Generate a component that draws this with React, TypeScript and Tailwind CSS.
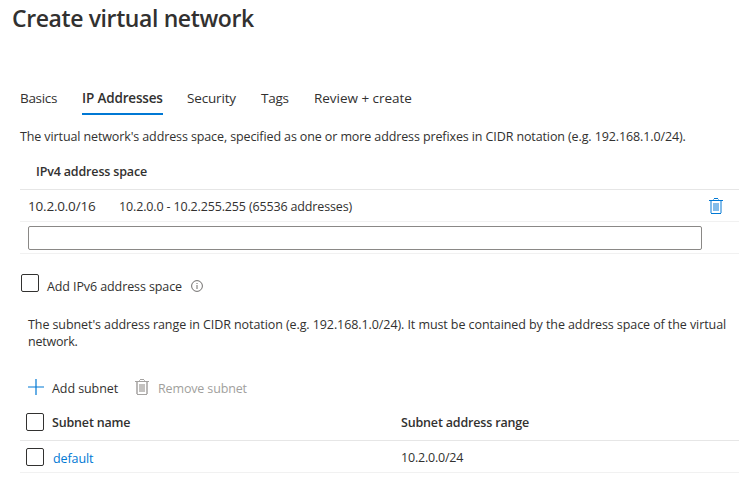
import type { ReactNode } from "react";

function TrashIcon({ dark, mid, fill }: { dark: string; mid: string; fill: string }) {
  return (
    <svg width="14" height="16" viewBox="0 0 14 16" shapeRendering="crispEdges" className="shrink-0">
      <rect x="5" y="0" width="4" height="1" fill={dark} />
      <rect x="4" y="1" width="1" height="1" fill={mid} />
      <rect x="9" y="1" width="1" height="1" fill={mid} />
      <rect x="0" y="2" width="14" height="1" fill={dark} />
      <rect x="1" y="3" width="2" height="12" fill={mid} />
      <rect x="11" y="3" width="2" height="12" fill={mid} />
      <rect x="4" y="5" width="6" height="8" fill={fill} />
      <rect x="2" y="15" width="10" height="1" fill={dark} />
    </svg>
  );
}

function PlusIcon() {
  return (
    <svg width="16" height="16" viewBox="0 0 16 16" className="shrink-0">
      <path d="M8 0v16M0 8h16" stroke="#0078d4" strokeWidth="1.2" fill="none" />
    </svg>
  );
}

function InfoIcon() {
  return (
    <svg width="12" height="12" viewBox="0 0 12 12" className="shrink-0">
      <circle cx="6" cy="6" r="5.4" fill="none" stroke="#605e5c" strokeWidth="0.9" />
      <path d="M6 5v4M6 3v1" stroke="#605e5c" strokeWidth="0.9" />
    </svg>
  );
}

function Checkbox({ className = "" }: { className?: string }) {
  return (
    <span
      role="checkbox"
      aria-checked="false"
      className={`block size-[18px] shrink-0 rounded-[2px] border border-[#323130] bg-white ${className}`}
    />
  );
}

function Tab({ children, className = "" }: { children: ReactNode; className?: string }) {
  return <div className={`h-[26px] text-[13.5px] leading-[18px] ${className}`}>{children}</div>;
}

export default function App() {
  return (
    <main className="h-[478px] w-[739px] overflow-hidden bg-white font-['Open_Sans','Noto_Sans',sans-serif] text-[12.5px] leading-[17px] whitespace-nowrap text-[#323130]">
      <h1 className="h-[89px] pt-[3px] pl-3 text-[23px] leading-[30px] font-semibold tracking-[-0.39px]">
        Create virtual network
      </h1>

      <nav className="flex pl-5">
        <Tab className="w-[62px] tracking-[-0.33px]">Basics</Tab>
        <Tab className="mr-[24px] w-[81px] border-b-2 border-[#0078d4] font-semibold tracking-[-0.17px]">
          IP Addresses
        </Tab>
        <Tab className="w-[74px] tracking-[-0.17px]">Security</Tab>
        <Tab className="w-[53px] tracking-[-0.25px]">Tags</Tab>
        <Tab className="tracking-[-0.03px]">Review + create</Tab>
      </nav>

      <section className="pl-5">
        <p className="pt-[13px] tracking-[-0.113px]">
          The virtual network's address space, specified as one or more address prefixes in CIDR notation (e.g.
          192.168.1.0/24).
        </p>
        <div className="mt-[18px] h-[27px] border-b border-[#e6e6e6] pl-4 font-semibold tracking-[-0.16px]">
          IPv4 address space
        </div>
        <div className="flex h-8 items-center border-b border-[#f1f1f1] pr-4 pl-2">
          <span className="mt-[2px] w-[91px] text-[13.5px] tracking-[-0.2px]">10.2.0.0/16</span>
          <span className="mt-[2px] flex-1 tracking-[-0.15px]">10.2.0.0 - 10.2.255.255 (65536 addresses)</span>
          <TrashIcon dark="#0078d4" mid="#83bcea" fill="#83bcea" />
        </div>
        <div className="h-8 border-b border-[#f1f1f1] pt-1 pl-2">
          <div className="h-6 w-[674px] rounded-[2px] border border-[#8a8886]" />
        </div>
        <div className="flex pt-5 pl-px">
          <Checkbox />
          <span className="mt-1 ml-2 w-[136px] tracking-[-0.1px]">Add IPv6 address space</span>
          <span className="mt-[6px] ml-2">
            <InfoIcon />
          </span>
        </div>
      </section>

      <section className="pl-5">
        <p className="mt-[21px] pl-2 tracking-[-0.083px]">
          The subnet's address range in CIDR notation (e.g. 192.168.1.0/24). It must be contained by the address space
          of the virtual
          <br />
          <span className="tracking-[-0.2px]">network.</span>
        </p>
        <div className="mt-[29px] flex h-[17px] pl-2">
          <PlusIcon />
          <span className="mt-[1px] ml-2 w-[83px] tracking-[-0.08px]">Add subnet</span>
          <TrashIcon dark="#a5a3a1" mid="#bbb9b8" fill="#c4c2c0" />
          <span className="mt-[1px] ml-[9px] tracking-[-0.14px] text-[#a19f9d]">Remove subnet</span>
        </div>
        <div className="mt-[9px] flex h-9 items-center border-b border-[#e6e6e6] pl-[6px] font-semibold">
          <Checkbox className="-mt-[1px]" />
          <span className="ml-2 w-[349px] tracking-[-0.17px]">Subnet name</span>
          <span className="tracking-[-0.17px]">Subnet address range</span>
        </div>
        <div className="flex h-8 items-center border-b border-[#f1f1f1] pl-[6px]">
          <Checkbox />
          <a className="mt-[3px] ml-[9px] w-[348px] tracking-[-0.1px] text-[#0078d4]">default</a>
          <span className="mt-[2px] tracking-[-0.2px]">10.2.0.0/24</span>
        </div>
      </section>
    </main>
  );
}
